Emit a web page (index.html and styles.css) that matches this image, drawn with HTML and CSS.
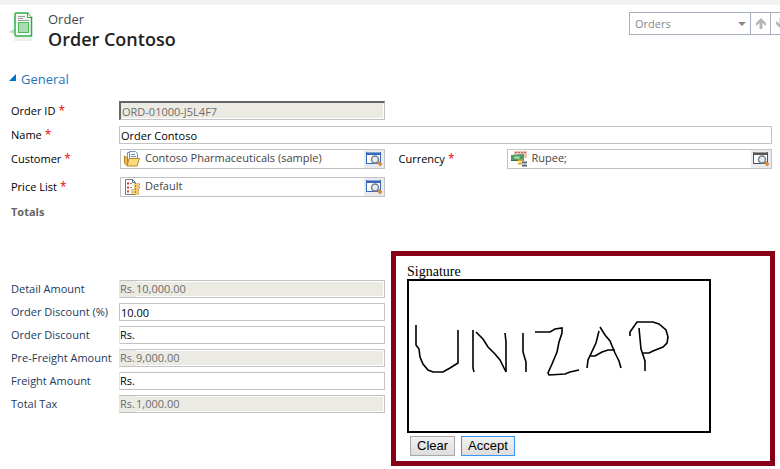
FILE: index.html
```html
<!DOCTYPE html>
<html lang="en">
<head>
<meta charset="utf-8">
<title>Order Contoso</title>
<link rel="stylesheet" href="styles.css">
</head>
<body>
<svg class="defs" width="0" height="0" aria-hidden="true">
  <symbol id="lookup" viewBox="0 0 18 16">
    <rect x="1.5" y="1.5" width="14" height="11" fill="#fff" stroke="currentColor"/>
    <rect x="1" y="1" width="15" height="3" fill="currentColor"/>
    <path d="M2 1.500h13" stroke="#fff" stroke-opacity=".4"/>
    <path class="handle" d="M12 12l2.500-2 3 3-2.500 2.500z"/>
    <circle cx="10" cy="8.500" r="3.500" fill="#e4edf5" stroke="#76818c" stroke-width="1.500"/>
  </symbol>
</svg>
<header class="page-header">
  <svg class="entity-icon" viewBox="0 0 26 30" aria-hidden="true">
    <path d="M0 21l5-3v5z" fill="#d0d0d0"/>
    <path d="M5 26h18v4H5z" fill="#e8f3e8"/>
    <path d="M6 2h13l4 4v19H6z" fill="#f3f6f3"/>
    <path d="M19.500 2H7Q6 2 6 3v21q0 1 1 1h15.500V6" fill="none" stroke="#2fae49" stroke-width="1.500"/>
    <path d="M18.500 2v4.500H23z" fill="#fff" stroke="#38a04a"/>
    <path d="M9 5.500h7M9 7.500h5M9 9.500h11" stroke="#9b9b9b"/>
    <rect x="9.500" y="11.500" width="10" height="10" fill="#a9dcae" stroke="#4cb95c"/>
  </svg>
  <div class="titles">
    <div class="entity">Order</div>
    <h1>Order Contoso</h1>
  </div>
  <nav class="record-nav" aria-label="Records">
    <div class="picker">
      <select aria-label="Record set"><option>Orders</option></select>
      <svg class="caret" viewBox="0 0 8 4" aria-hidden="true"><path d="M0 0h8L4 4z"/></svg>
    </div>
    <button type="button" aria-label="Previous record"><svg viewBox="0 0 10 12"><path d="M5 0L10 5V8L6.500 5v6h-3V5L0 8V5z"/></svg></button>
    <button type="button" aria-label="Next record"><svg viewBox="0 0 10 12"><path d="M5 11L10 6V3L6.500 6V0h-3v6L0 3v3z"/></svg></button>
  </nav>
</header>
<main>
  <h2><svg viewBox="0 0 7 7" aria-hidden="true"><path d="M7 0v7H0z"/></svg>General</h2>
  <section class="general">
    <div class="row">
      <label for="oid">Order ID<b>*</b></label>
      <input id="oid" class="box sunken" value="ORD-01000-J5L4F7" readonly>
    </div>
    <div class="row">
      <label for="name">Name<b>*</b></label>
      <input id="name" class="box wide" value="Order Contoso">
    </div>
    <div class="row">
      <label for="customer">Customer<b>*</b></label>
      <div class="lookup">
        <svg class="type" viewBox="0 0 16 16" aria-hidden="true">
          <path d="M3.500 1.500h8v10h-8z" fill="#fff" stroke="#6f94c4"/>
          <path d="M5.500 0.500h6l2 2v9h-8z" fill="#f6faff" stroke="#6f94c4"/>
          <path d="M7 3.500h4M7 5.500h5" stroke="#6f94c4"/>
          <path d="M0.500 5l3 2v8l-3-3z" fill="#e9bd4d" stroke="#b98425"/>
          <path d="M5 7.500h10.500l-2.500 7.500H3z" fill="#fadb7c" stroke="#b98425"/>
        </svg>
        <input id="customer" value="Contoso Pharmaceuticals (sample)">
        <button type="button" aria-label="Look up customer"><svg><use href="#lookup"/></svg></button>
      </div>
      <label class="second" for="currency">Currency<b>*</b></label>
      <div class="lookup grey">
        <svg class="type" viewBox="0 0 16 16" aria-hidden="true">
          <path d="M3 0h13v7H3z" fill="#ecc3b8"/>
          <path d="M4 1.500h11" stroke="#b96858" stroke-dasharray="2 1"/>
          <path d="M0 4l13-1v7H0z" fill="#4d9a63"/>
          <path d="M0 9.500h9" stroke="#2f7046"/>
          <ellipse cx="6" cy="6.500" rx="3" ry="1.500" fill="#9bd0a6"/>
          <path d="M7 9.500h5M7 12.500h4" stroke="#e0a62c" stroke-width="2"/>
          <path d="M7 11h4" stroke="#fae28b"/>
          <path d="M11 11.500h5M11 14.500h5" stroke="#59636e" stroke-width="2"/>
          <path d="M11 13h5" stroke="#c8d0da"/>
        </svg>
        <input id="currency" value="Rupee;">
        <button type="button" aria-label="Look up currency"><svg><use href="#lookup"/></svg></button>
      </div>
    </div>
    <div class="row spaced">
      <label for="price">Price List<b>*</b></label>
      <div class="lookup">
        <svg class="type" viewBox="0 0 16 16" aria-hidden="true">
          <path d="M1.500 0.500h7l3 3v12h-10z" fill="#fff" stroke="#68788f"/>
          <path d="M8.500 0.500v3h3" fill="none" stroke="#68788f"/>
          <path d="M3 4.500h2M3 8.500h2M3 12.500h2" stroke="#d0432f" stroke-width="2"/>
          <path d="M6 4.500h2M6 8.500h2" stroke="#889"/>
          <path d="M10 5.500h6M10 8.500h6M7 11.500h8M7 14.500h8" stroke="#c98a16" stroke-width="2"/>
          <path d="M10 5.500h5M10 8.500h5M7 11.500h7M7 14.500h7" stroke="#f8d964"/>
        </svg>
        <input id="price" value="Default">
        <button type="button" aria-label="Look up price list"><svg><use href="#lookup"/></svg></button>
      </div>
    </div>
    <h3>Totals</h3>
  </section>
  <div class="lower">
    <section class="totals">
      <div class="total"><label for="t1">Detail Amount</label><div class="money locked"><span>Rs.</span><input id="t1" value="10,000.00" readonly></div></div>
      <div class="total"><label for="t2">Order Discount (%)</label><input id="t2" class="box" value="10.00"></div>
      <div class="total"><label for="t3">Order Discount</label><div class="money"><span>Rs.</span><input id="t3"></div></div>
      <div class="total"><label for="t4">Pre-Freight Amount</label><div class="money locked"><span>Rs.</span><input id="t4" value="9,000.00" readonly></div></div>
      <div class="total"><label for="t5">Freight Amount</label><div class="money"><span>Rs.</span><input id="t5"></div></div>
      <div class="total"><label for="t6">Total Tax</label><div class="money locked"><span>Rs.</span><input id="t6" value="1,000.00" readonly></div></div>
    </section>
    <section class="signature">
      <div class="caption">Signature</div>
      <svg class="pad" width="300" height="150" viewBox="0 0 300 150" role="img" aria-label="Handwritten signature">
        <path d="M7 44V64L10 68 11 76 14 83 19 89 24 91H34L41 87 49 82V49"/>
        <path d="M64 49V87L65 91M67 51L74 58 79 66 86 73 91 79 97 91V61L96 52"/>
        <path d="M114 52V71L117 81V91"/>
        <path d="M126 51H141L146 48 153 47V52L150 61 148 71 143 83 139 92 140 94 156 93 161 91 170 89"/>
        <path d="M178 87L179 79 187 62 190 50M191 46L196 54 201 60 206 72 210 80 212 87M180 75H186L193 71 199 69H206"/>
        <path d="M221 55V51L228 41H244L250 43 257 49 259 56 258 62 254 66 244 70 240 72H234M230 47L232 68 236 80V90"/>
      </svg>
      <div class="actions"><button type="button">Clear</button><button type="button" class="primary">Accept</button></div>
    </section>
  </div>
</main>
</body>
</html>
```

FILE: styles.css
```css
* { box-sizing: border-box; }
body {
  margin: 0;
  border-top: 5px solid #f2f2f2;
  background: #fff;
  color: #000;
  font: 11px/16px "Open Sans", "Noto Sans", sans-serif;
  overflow-x: hidden;
}
.defs { position: absolute; }
input, select, button { font: inherit; color: inherit; margin: 0; border-radius: 0; }
input { min-width: 0; }
h1, h2, h3 { margin: 0; }
button svg { display: block; }

.page-header { display: flex; align-items: flex-start; padding: 6px 0 0 9px; overflow: hidden; }
.entity-icon { width: 26px; height: 30px; }
.titles { flex: 1; padding-left: 13px; }
.entity { font-size: 13px; line-height: 17px; color: #444; }
h1 { font-size: 18px; line-height: 22px; font-weight: 600; color: #222; }
.record-nav { display: flex; margin: 1px -11px 0 0; color: #888; }
.picker { position: relative; width: 122px; }
.picker select {
  display: block; appearance: none; width: 100%; height: 23px; padding: 0 5px;
  border: 1px solid #a5b0bf; background: #fff; font-size: 11px;
}
.caret { position: absolute; right: 5px; top: 10px; width: 8px; height: 4px; fill: #888; }
.record-nav button {
  width: 21px; height: 23px; margin-left: -1px; padding: 5px;
  border: 1px solid #a5b0bf; background: #fff;
}
.record-nav button svg { width: 10px; height: 12px; fill: #b5b5b5; }

h2 {
  display: flex; align-items: center; gap: 5px; padding: 19px 0 12px 9px;
  font-size: 13px; line-height: 20px; font-weight: 400; color: #1e74b8;
}
h2 svg { width: 7px; height: 7px; margin-bottom: 4px; fill: #0072c6; }

.general { display: flex; flex-direction: column; gap: 5px; padding: 0 8px 0 11px; }
.row { display: grid; grid-template-columns: 108px 1fr 122px 1fr; align-items: center; }
.row.spaced { margin-top: 3px; }
.row label b { padding-left: 3px; color: #f00000; font-size: 12px; font-weight: 400; line-height: 12px; }
.second { padding-left: 14px; }
.box { width: 100%; height: 18px; padding: 0 1px; border: 1px solid #c3c3c3; background: #fff; }
.wide { grid-column: 2 / -1; }
.sunken {
  height: 19px; margin-bottom: 1px; border-top: 2px solid #666; border-left: 2px solid #666;
  background: #ebebe4; color: #6d6d6d; box-shadow: inset -1px -1px #fff;
}
.lookup {
  display: flex; height: 20px; margin-left: 1px;
  border: 1px solid #c3c3c3; color: #444;
}
.type { width: 16px; height: 16px; margin: 1px 4px 0 3px; flex: none; }
.lookup input { flex: 1; height: 16px; padding: 0 1px; border: 0; background: none; }
.lookup button {
  width: 20px; height: 18px; padding: 1px; border: 0;
  background: #e9ebf1; color: #3568b7; flex: none;
}
.lookup button svg { width: 18px; height: 16px; }
.handle { fill: #d98a35; }
.grey { margin-left: 0; }
.grey button { color: #555; }
.grey .handle { fill: #666; }
h3 { padding: 2px 0; font-size: 11px; line-height: 16px; font-weight: 700; color: #666; }

.lower { display: grid; grid-template-columns: 374fr 384fr; gap: 6px; padding: 29px 5px 0 11px; }
.totals { display: flex; flex-direction: column; gap: 5px; padding-top: 29px; color: #23395d; }
.total { display: grid; grid-template-columns: 108px 1fr; align-items: center; height: 18px; }
.total label { white-space: nowrap; }
.money { display: flex; height: 18px; border: 1px solid #c3c3c3; border-left-color: #e4e4e8; }
.money span { width: 16px; line-height: 16px; }
.money input { flex: 1; padding: 0; border: 1px solid #fff; border-left: 0; background: #fff; }
.money, .total .box { color: #000; }
.money.locked { color: #6d6d6d; }
.locked span, .locked input { background: #ebebe4; }

.signature { padding: 8px 11px 5px; border: 5px solid #870018; font-family: "Liberation Serif", serif; }
.caption { font-size: 14px; line-height: 15px; }
.pad { display: block; box-sizing: content-box; border: 2px solid #000; fill: none; stroke: #000; stroke-width: 1.6; }
.actions { display: flex; gap: 6px; padding: 3px 0 0 3px; font: 13px/16px "Liberation Sans", Arial, sans-serif; }
.actions button { height: 20px; padding: 0 6px; border: 1px solid #a9a9a9; background: linear-gradient(#f2f2f2, #ddd); }
.actions .primary { border-color: #3c96f5; }
```
